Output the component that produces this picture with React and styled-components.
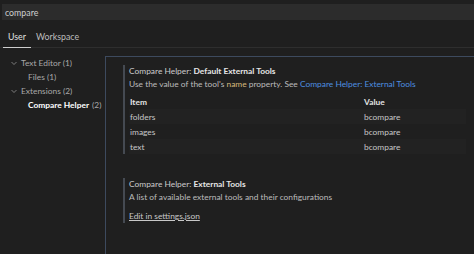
import React from "react";
import styled, { createGlobalStyle } from "styled-components";

const GlobalStyle = createGlobalStyle`
  html, body {
    margin: 0;
    padding: 0;
    background: #1f1f1f;
    height: 100%;
    overflow: hidden;
  }
  body {
    font-family: Lato, "Noto Sans", sans-serif;
    font-size: 8.4px;
    color: #cccccc;
  }
`;

const Page = styled.div`
  width: 474px;
  height: 254px;
  display: flex;
  flex-direction: column;
`;

const SearchBox = styled.div`
  margin: 4px 0 0 2px;
  height: 16px;
  background: #2c2c2c;
  display: flex;
  align-items: center;
  padding-left: 3px;
  font-size: 8.8px;
  color: #cfcfcf;
`;

const TabRow = styled.div`
  display: flex;
  margin-top: 11px;
  padding-left: 3px;
  border-bottom: 1px solid #2e2e2e;
`;

const Tab = styled.div`
  padding: 0 5px 5px;
  font-size: 8.8px;
  color: ${(p) => (p.active ? "#e0e0e0" : "#bdbdbd")};
  border-bottom: 1px solid ${(p) => (p.active ? "#cfcfcf" : "transparent")};
  margin-bottom: -1px;
`;

const Body = styled.div`
  flex: 1;
  display: flex;
  margin-top: 8px;
`;

const Sidebar = styled.div`
  width: 105px;
  flex-shrink: 0;
`;

const TreeItem = styled.div`
  display: flex;
  align-items: center;
  height: 14px;
  padding-left: ${(p) => p.indent}px;
  color: ${(p) => (p.selected ? "#ffffff" : "#a9a9a9")};
  font-weight: ${(p) => (p.selected ? 700 : 400)};
  white-space: nowrap;
`;

const Count = styled.span`
  font-weight: 400;
  color: #a9a9a9;
  margin-left: 3px;
`;

const Chevron = styled.svg`
  width: 8px;
  height: 8px;
  margin-right: 3px;
  flex-shrink: 0;
`;

const Panel = styled.div`
  flex: 1;
  border-left: 1px solid #3d4a5e;
  border-top: 1px solid #3d4a5e;
  padding: 8px 8px 0 17px;
`;

const Setting = styled.div`
  border-left: 2px solid #454a52;
  padding-left: 4px;
  margin-bottom: ${(p) => p.gap || 0}px;
`;

const Title = styled.div`
  color: #cccccc;
  line-height: 13px;
  white-space: nowrap;
  b {
    color: #e7e7e7;
    font-weight: 700;
  }
`;

const Description = styled.div`
  color: #bcbcbc;
  line-height: 13px;
  white-space: nowrap;
`;

const Code = styled.span`
  color: #d7ba7d;
`;

const Link = styled.span`
  color: #4e8fe0;
`;

const Table = styled.div`
  margin-top: 3px;
`;

const Row = styled.div`
  display: grid;
  grid-template-columns: 234px 1fr;
  height: 15px;
  align-items: center;
  padding-left: 1px;
  background: ${(p) => (p.shade ? "#222222" : "transparent")};
  font-weight: ${(p) => (p.header ? 700 : 400)};
  color: ${(p) => (p.header ? "#e4e4e4" : "#c8c8c8")};
`;

const EditLink = styled.div`
  margin-top: 6px;
  text-decoration: underline;
  color: #c8c8c8;
  line-height: 13px;
`;

const ChevronIcon = () => (
  <Chevron viewBox="0 0 16 16">
    <path d="M3 6l5 5 5-5" fill="none" stroke="#9a9a9a" strokeWidth="1.5" />
  </Chevron>
);

const rows = [
  ["folders", "bcompare"],
  ["images", "bcompare"],
  ["text", "bcompare"],
];

export default function App() {
  return (
    <Page>
      <GlobalStyle />
      <SearchBox>compare</SearchBox>
      <TabRow>
        <Tab active>User</Tab>
        <Tab>Workspace</Tab>
      </TabRow>
      <Body>
        <Sidebar>
          <TreeItem indent={10}>
            <ChevronIcon />
            Text Editor (1)
          </TreeItem>
          <TreeItem indent={28}>Files (1)</TreeItem>
          <TreeItem indent={10}>
            <ChevronIcon />
            Extensions (2)
          </TreeItem>
          <TreeItem indent={28} selected>
            Compare Helper<Count>(2)</Count>
          </TreeItem>
        </Sidebar>
        <Panel>
          <Setting gap={24}>
            <Title>
              Compare Helper: <b>Default External Tools</b>
            </Title>
            <Description>
              Use the value of the tool's <Code>name</Code> property. See{" "}
              <Link>Compare Helper: External Tools</Link>
            </Description>
            <Table>
              <Row header>
                <span>Item</span>
                <span>Value</span>
              </Row>
              {rows.map(([k, v], i) => (
                <Row key={k} shade={i % 2 === 0}>
                  <span>{k}</span>
                  <span>{v}</span>
                </Row>
              ))}
            </Table>
          </Setting>
          <Setting>
            <Title>
              Compare Helper: <b>External Tools</b>
            </Title>
            <Description>A list of available external tools and their configurations</Description>
            <EditLink>Edit in settings.json</EditLink>
          </Setting>
        </Panel>
      </Body>
    </Page>
  );
}
